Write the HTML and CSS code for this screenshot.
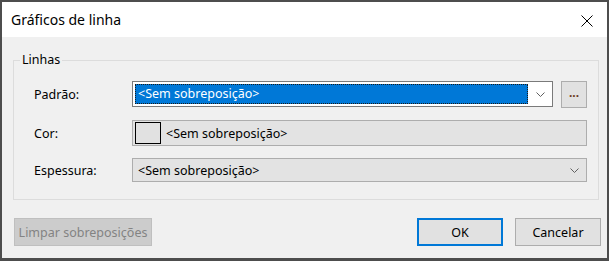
FILE: index.html
```html
<!DOCTYPE html>
<html lang="pt">
<head>
    <meta charset="UTF-8">
    <title>Gráficos de linha</title>
    <link rel="stylesheet" href="styles.css">
</head>
<body>
    <div class="window">
        <div class="titlebar">
            <span class="title">Gráficos de linha</span>
            <span class="close">
                <svg width="12" height="12" viewBox="0 0 12 12">
                    <path d="M0.5 0.5 L11.5 11.5 M11.5 0.5 L0.5 11.5" stroke="#000" stroke-width="1" fill="none"/>
                </svg>
            </span>
        </div>
        <div class="content">
            <fieldset class="group">
                <legend>Linhas</legend>
                <div class="rows">
                    <label>Padrão:</label>
                    <div class="line">
                        <div class="combo focus">
                            <span class="selected">&lt;Sem sobreposição&gt;</span>
                            <span class="arrow">
                                <svg width="9" height="5" viewBox="0 0 9 5">
                                    <path d="M0.5 0.5 L4.5 4.5 L8.5 0.5" stroke="#606060" fill="none"/>
                                </svg>
                            </span>
                        </div>
                        <button class="dots">...</button>
                    </div>

                    <label>Cor:</label>
                    <div class="field color">
                        <span class="swatch"></span>
                        <span>&lt;Sem sobreposição&gt;</span>
                    </div>

                    <label>Espessura:</label>
                    <div class="combo disabled">
                        <span class="value">&lt;Sem sobreposição&gt;</span>
                        <span class="arrow">
                            <svg width="9" height="5" viewBox="0 0 9 5">
                                <path d="M0.5 0.5 L4.5 4.5 L8.5 0.5" stroke="#606060" fill="none"/>
                            </svg>
                        </span>
                    </div>
                </div>
            </fieldset>
            <div class="buttons">
                <button class="btn" disabled>Limpar sobreposições</button>
                <span class="spacer"></span>
                <button class="btn default">OK</button>
                <button class="btn">Cancelar</button>
            </div>
        </div>
    </div>
</body>
</html>
```

FILE: styles.css
```css
body {
    margin: 0;
    padding: 0;
    background-color: #4d4d4d;
    font-family: "Noto Sans", sans-serif;
    font-size: 12.5px;
    color: #000;
}
.window {
    width: 605px;
    height: 256px;
    border-style: solid;
    border-color: #4d4d4d;
    border-width: 2px 2px 3px 2px;
    background-color: #f0f0f0;
    display: flex;
    flex-direction: column;
}
.titlebar {
    height: 35px;
    background-color: #fff;
    display: flex;
    align-items: center;
    justify-content: space-between;
    padding: 0 14px 0 9px;
}
.title {
    font-size: 14px;
}
.close {
    display: flex;
    margin-top: 2px;
}
.content {
    padding: 15px 6px 0 11px;
}
.group {
    margin: 0;
    width: 586px;
    padding: 12px 11px 17px 20px;
    border: 1px solid #dcdcdc;
    box-sizing: border-box;
    min-width: 0;
}
.group legend {
    padding: 0 2px;
    margin-left: -14px;
    line-height: 16px;
}
.rows {
    display: grid;
    grid-template-columns: 98px 1fr;
    row-gap: 12px;
    align-items: center;
}
.line {
    display: flex;
    align-items: center;
    gap: 8px;
}
.combo {
    display: flex;
    align-items: center;
    box-sizing: border-box;
    height: 26px;
    border: 1px solid #7a7a7a;
    background-color: #fff;
    flex: 1;
}
.combo .arrow {
    display: flex;
    width: 24px;
    justify-content: center;
}
.selected {
    flex: 1;
    margin: 2px 0 2px 2px;
    height: 20px;
    line-height: 18px;
    padding-left: 2px;
    box-sizing: border-box;
    background-color: #0078d7;
    color: #fff;
    border: 1px dotted #1a1a1a;
}
.combo.disabled {
    height: 24px;
    border-color: #adadad;
    background-color: #e3e3e3;
}
.combo.disabled .value {
    flex: 1;
    padding-left: 5px;
}
.dots {
    width: 26px;
    height: 27px;
    margin-top: 1px;
    padding: 0 0 4px;
    background-color: #e1e1e1;
    border: 1px solid #adadad;
    font-family: inherit;
    font-size: 12px;
    font-weight: bold;
    color: #6b3a1a;
}
.field {
    display: flex;
    align-items: center;
    box-sizing: border-box;
    height: 26px;
    border: 1px solid #adadad;
    background-color: #e3e3e3;
}
.swatch {
    width: 26px;
    height: 22px;
    box-sizing: border-box;
    margin: 0 5px 0 2px;
    border: 1px solid #000;
    background-color: #e1e1e1;
}
.buttons {
    display: flex;
    gap: 12px;
    margin-top: 18px;
    padding-left: 1px;
}
.spacer {
    flex: 1;
}
.btn {
    height: 28px;
    width: 86px;
    padding: 0;
    font-family: inherit;
    font-size: 12.5px;
    background-color: #e1e1e1;
    border: 1px solid #adadad;
    color: #000;
}
.btn:disabled {
    width: 138px;
    background-color: #cccccc;
    border-color: #bfbfbf;
    color: #838383;
}
.btn.default {
    border: 2px solid #0078d7;
}
```
